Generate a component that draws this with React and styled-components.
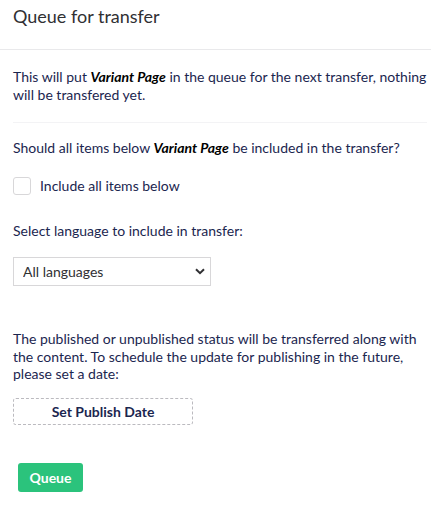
import React from "react";
import styled, { createGlobalStyle } from "styled-components";

const GlobalStyle = createGlobalStyle`
  html, body {
    margin: 0;
    padding: 0;
    background: #ffffff;
  }
  body {
    font-family: Lato, "Open Sans", "Liberation Sans", sans-serif;
    color: #1b264f;
    font-size: 14px;
  }
`;

const Panel = styled.div`
  width: 431px;
  min-height: 513px;
  background: #ffffff;
`;

const Header = styled.header`
  box-sizing: border-box;
  height: 50px;
  padding: 5px 13px 0;
  border-bottom: 1px solid #e9e9eb;

  h1 {
    margin: 0;
    font-size: 18px;
    line-height: 22px;
    font-weight: 400;
    color: #303033;
  }
`;

const Content = styled.div`
  padding: 18px 0 0 13px;
`;

const Section = styled.div`
  margin-right: 4px;
  padding-bottom: ${(p) => p.$bottom || 0}px;
  border-bottom: ${(p) => (p.$divider ? "1px solid #f3f3f5" : "none")};
  margin-bottom: ${(p) => p.$gap || 0}px;
`;

const Text = styled.p`
  margin: 0;
  max-width: ${(p) => p.$maxw || 414}px;
  font-size: 14px;
  line-height: 17.5px;
  color: #1b264f;
  margin-top: ${(p) => p.$mt || 0}px;
  margin-bottom: ${(p) => p.$mb || 0}px;

  em {
    font-weight: 700;
    font-style: italic;
    color: #000000;
  }
`;

const CheckRow = styled.label`
  display: flex;
  align-items: center;
  gap: 9px;
  height: 18px;
  font-size: 14px;
  color: #1b264f;
`;

const Box = styled.span`
  box-sizing: border-box;
  width: 18px;
  height: 18px;
  border: 1px solid #d8d7d9;
  border-radius: 3px;
  background: #fff;
`;

const SelectWrap = styled.div`
  position: relative;
  width: 198px;
  margin-top: 18px;
`;

const Select = styled.select`
  appearance: none;
  box-sizing: border-box;
  display: block;
  width: 198px;
  height: 29px;
  padding: 0 24px 0 9px;
  border: 1px solid #d8d7d9;
  border-radius: 0;
  background: #fff;
  font-family: Lato, "Open Sans", "Liberation Sans", sans-serif;
  font-size: 14px;
  color: #303033;
  outline: none;
`;

const Chevron = styled.svg`
  position: absolute;
  right: 6px;
  top: 11px;
  pointer-events: none;
`;

const DashedButton = styled.button`
  box-sizing: border-box;
  display: block;
  width: 180px;
  height: 27px;
  margin-top: 15px;
  border: 1px dashed #bbbabf;
  border-radius: 3px;
  background: #fff;
  font-family: Lato, "Open Sans", "Liberation Sans", sans-serif;
  font-size: 14px;
  font-weight: 700;
  color: #1b264f;
  cursor: pointer;
`;

const PrimaryButton = styled.button`
  box-sizing: border-box;
  display: block;
  width: 65px;
  height: 29px;
  margin: 38px 0 0 5px;
  border: none;
  border-radius: 3px;
  background: #2bc37c;
  font-family: Lato, "Open Sans", "Liberation Sans", sans-serif;
  font-size: 14px;
  font-weight: 700;
  color: #ffffff;
  cursor: pointer;
`;

export default function App() {
  return (
    <Panel>
      <GlobalStyle />
      <Header>
        <h1>Queue for transfer</h1>
      </Header>
      <Content>
        <Section $divider $bottom={19} $gap={16}>
          <Text $maxw={418}>
            This will put <em>Variant Page</em> in the queue for the next
            transfer, nothing will be transfered yet.
          </Text>
        </Section>

        <Text $mb={20}>
          Should all items below <em>Variant Page</em> be included in the
          transfer?
        </Text>
        <CheckRow>
          <Box />
          Include all items below
        </CheckRow>

        <Text $mt={27}>Select language to include in transfer:</Text>
        <SelectWrap>
          <Select defaultValue="all">
            <option value="all">All languages</option>
          </Select>
          <Chevron width="10" height="7" viewBox="0 0 10 7">
            <path d="M1 1.2 L5 5.2 L9 1.2" fill="none" stroke="#303033" strokeWidth="2" />
          </Chevron>
        </SelectWrap>

        <Text $mt={44} $maxw={405}>
          The published or unpublished status will be transferred along with
          the content. To schedule the update for publishing in the future,
          please set a date:
        </Text>
        <DashedButton>Set Publish Date</DashedButton>
        <PrimaryButton>Queue</PrimaryButton>
      </Content>
    </Panel>
  );
}
